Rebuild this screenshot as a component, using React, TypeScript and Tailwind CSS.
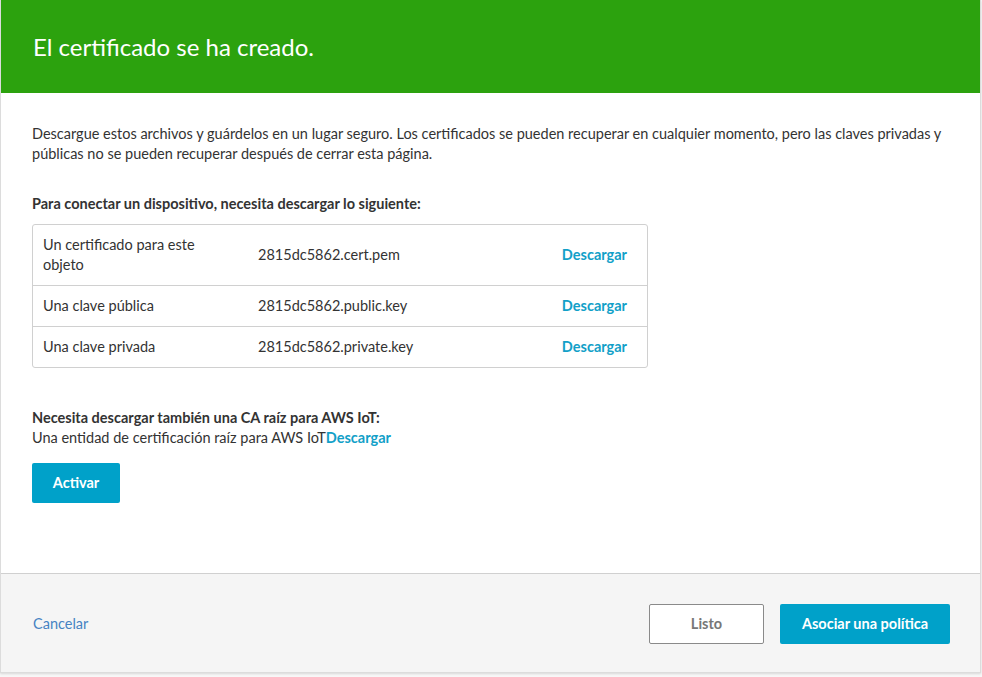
const files = [
  { label: "Un certificado para este objeto", file: "2815dc5862.cert.pem" },
  { label: "Una clave pública", file: "2815dc5862.public.key" },
  { label: "Una clave privada", file: "2815dc5862.private.key" },
];

export default function App() {
  return (
    <div className="min-h-[677px] bg-[#f7f7f7] font-['Lato',sans-serif] text-[14.5px] leading-5 text-[#333]">
      <div className="w-[981px] border-l border-r border-b border-[#dcdcdc] bg-white shadow-[0_1px_2px_rgba(0,0,0,0.12)]">
        <div className="flex h-[93px] items-center bg-[#2ca20e] px-8">
          <h1 className="text-[24px] font-normal text-white">El certificado se ha creado.</h1>
        </div>

        <div className="px-[31px] pt-[31px] pb-[70px]">
          <p className="max-w-[918px]">
            Descargue estos archivos y guárdelos en un lugar seguro. Los certificados se pueden recuperar en cualquier momento, pero las claves privadas y públicas no se pueden recuperar después de cerrar esta página.
          </p>

          <h2 className="mt-[30px] font-bold">Para conectar un dispositivo, necesita descargar lo siguiente:</h2>

          <div className="mt-[10px] w-[616px] rounded-[3px] border border-[#d0d0d0]">
            {files.map((f, i) => (
              <div
                key={f.file}
                className={"grid grid-cols-[215px_1fr_auto] items-center px-[10px] py-[10px] " + (i > 0 ? "border-t border-[#d0d0d0]" : "")}
              >
                <span className="max-w-[170px]">{f.label}</span>
                <span>{f.file}</span>
                <a href="#" className="pr-[10px] font-bold text-[#12a0c8]">Descargar</a>
              </div>
            ))}
          </div>

          <h2 className="mt-10 font-bold">Necesita descargar también una CA raíz para AWS IoT:</h2>
          <p>
            Una entidad de certificación raíz para AWS IoT
            <a href="#" className="font-bold text-[#12a0c8]">Descargar</a>
          </p>

          <button type="button" className="mt-[15px] h-10 w-[88px] rounded-[2px] bg-[#00a1c9] font-bold text-white">
            Activar
          </button>
        </div>

        <div className="flex items-center justify-between border-t border-[#d0d0d0] bg-[#f5f5f5] pl-[32px] pr-[30px] pt-[30px] pb-[28px]">
          <a href="#" className="text-[#4683c3]">Cancelar</a>
          <div className="flex gap-4">
            <button type="button" className="h-10 w-[115px] rounded-[2px] border border-[#8a8a8a] bg-white font-bold text-[#777]">
              Listo
            </button>
            <button type="button" className="h-10 w-[170px] rounded-[2px] bg-[#00a1c9] font-bold text-white">
              Asociar una política
            </button>
          </div>
        </div>
      </div>
    </div>
  );
}
